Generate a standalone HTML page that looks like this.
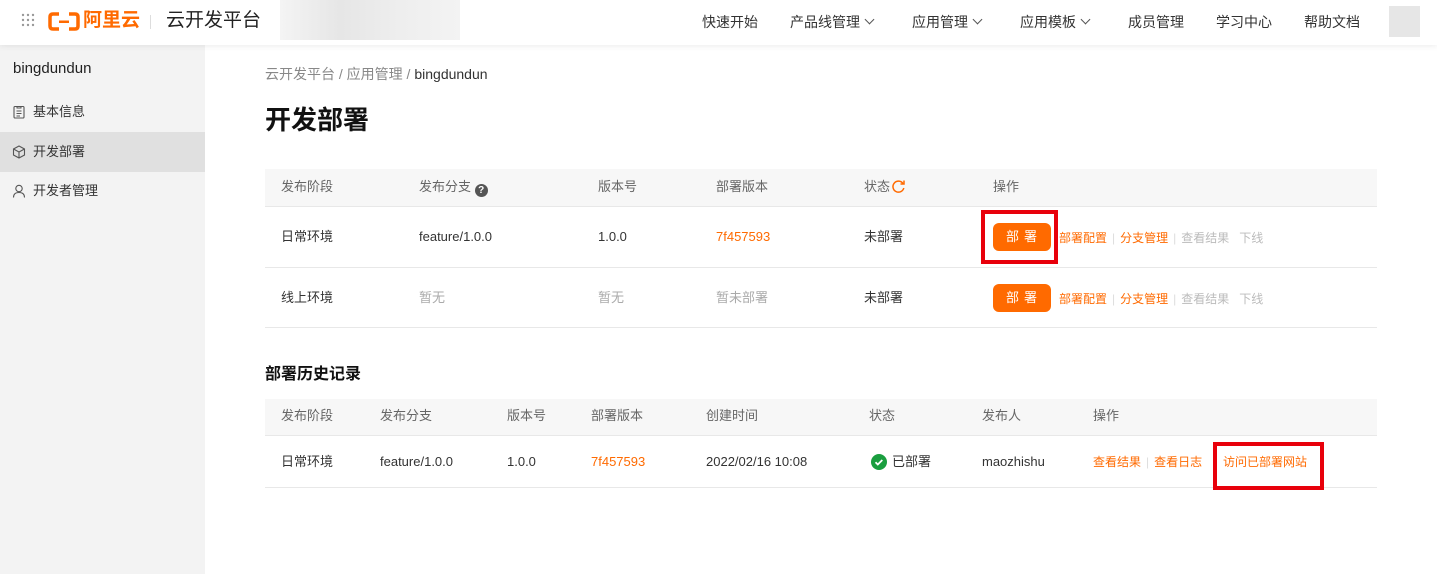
<!DOCTYPE html><html><head><meta charset="utf-8"><style>
*{margin:0;padding:0;box-sizing:border-box}
body{width:1437px;height:574px;position:relative;overflow:hidden;background:#fff;font-family:"Liberation Sans","Noto Sans CJK SC",sans-serif;font-size:13px;color:#333}
.a{position:absolute;white-space:nowrap;line-height:18px}
.hdr{position:absolute;left:0;top:0;width:1437px;height:45px;background:#fff;box-shadow:0 1px 6px rgba(0,0,0,.08);z-index:2}
.nav{top:12px;font-size:14px;line-height:20px;color:#333}
.side{position:absolute;left:0;top:45px;width:205px;height:529px;background:#f3f3f3}
.o{color:#ff6a00}.g{color:#aaa}.sep{color:#ddd;margin:0 5px}
.btn{position:absolute;width:58px;height:28px;background:#ff6a00;border-radius:6px;color:#fff;text-align:center;line-height:28px;font-size:13px;letter-spacing:5px;padding-left:4px}
.red{position:absolute;border:4px solid #e8000b}
.chev{display:inline-block;width:7px;height:7px;border-right:1.2px solid #555;border-bottom:1.2px solid #555;transform:rotate(45deg);margin-left:6px;position:relative;top:-4px}
</style></head><body>
<div class="hdr">
<svg class="a" style="left:21px;top:13px" width="14" height="14"><g fill="#999"><circle cx="2" cy="2" r="1.2"/><circle cx="7" cy="2" r="1.2"/><circle cx="12" cy="2" r="1.2"/><circle cx="2" cy="7" r="1.2"/><circle cx="7" cy="7" r="1.2"/><circle cx="12" cy="7" r="1.2"/><circle cx="2" cy="12" r="1.2"/><circle cx="7" cy="12" r="1.2"/><circle cx="12" cy="12" r="1.2"/></g></svg>
<svg class="a" style="left:48px;top:12px" width="32" height="19"><path d="M11 2H5Q2 2 2 5V14Q2 17 5 17H11M21 2H27Q30 2 30 5V14Q30 17 27 17H21" fill="none" stroke="#ff6a00" stroke-width="3.5"/><rect x="11" y="8.5" width="10" height="2.5" fill="#ff6a00"/></svg>
<div class="a" style="left:83px;top:9px;font-size:19px;line-height:24px;font-weight:bold;color:#ff6a00">阿里云</div>
<div class="a" style="left:150px;top:15px;width:1px;height:14px;background:#ddd"></div>
<div class="a" style="left:166px;top:9px;font-size:19px;line-height:24px;color:#222">云开发平台</div>
<div class="a" style="left:280px;top:0;width:180px;height:40px;background:linear-gradient(90deg,#f4f4f4,#e6e6e6,#eee,#f3f3f3)"></div>
<div class="a nav" style="left:702px">快速开始</div>
<div class="a nav" style="left:790px">产品线管理<span class="chev"></span></div>
<div class="a nav" style="left:912px">应用管理<span class="chev"></span></div>
<div class="a nav" style="left:1020px">应用模板<span class="chev"></span></div>
<div class="a nav" style="left:1128px">成员管理</div>
<div class="a nav" style="left:1216px">学习中心</div>
<div class="a nav" style="left:1304px">帮助文档</div>
<div class="a" style="left:1389px;top:6px;width:31px;height:31px;background:#e6e6e6"></div>
</div>
<div class="side">
<div class="a" style="left:13px;top:14px;font-size:15px;line-height:20px;color:#222">bingdundun</div>
<svg class="a" style="left:13px;top:60px" width="12" height="14"><rect x="1" y="1.5" width="10" height="11.5" rx="1" fill="none" stroke="#555" stroke-width="1.1"/><path d="M4 1V3H8V1M3.5 6H8.5M3.5 8.5H8.5M3.5 11H7" stroke="#555" stroke-width="1" fill="none"/></svg>
<div class="a" style="left:33px;top:58px">基本信息</div>
<div class="a" style="left:0;top:87px;width:205px;height:40px;background:#e0e0e0"></div>
<svg class="a" style="left:12px;top:100px" width="14" height="14"><path d="M7 1L12.5 4V10L7 13L1.5 10V4Z M1.5 4L7 7L12.5 4M7 7V13" fill="none" stroke="#555" stroke-width="1.1"/></svg>
<div class="a" style="left:33px;top:98px">开发部署</div>
<svg class="a" style="left:12px;top:139px" width="14" height="14"><circle cx="7" cy="4.5" r="3.2" fill="none" stroke="#555" stroke-width="1.1"/><path d="M1.5 13.5Q1.5 8.5 7 8.5Q12.5 8.5 12.5 13.5" fill="none" stroke="#555" stroke-width="1.1"/></svg>
<div class="a" style="left:33px;top:137px">开发者管理</div>
</div>
<div class="a" style="left:265px;top:64px;font-size:14px;line-height:20px;color:#888">云开发平台 / 应用管理 / <span style="color:#333">bingdundun</span></div>
<div class="a" style="left:265px;top:103px;font-size:26px;line-height:34px;font-weight:bold;color:#111">开发部署</div>
<div class="a" style="left:265px;top:169px;width:1112px;height:38px;background:#f7f7f7;border-bottom:1px solid #e8e8e8"></div>
<div class="a" style="left:265px;top:267px;width:1112px;height:1px;background:#e8e8e8"></div>
<div class="a" style="left:265px;top:327px;width:1112px;height:1px;background:#e8e8e8"></div>
<div class="a" style="left:281px;top:178px;color:#666">发布阶段</div>
<div class="a" style="left:419px;top:178px;color:#666">发布分支 <span style="display:inline-block;width:13px;height:13px;border-radius:50%;background:#555;color:#fff;font-size:10px;text-align:center;line-height:13px;font-weight:bold;vertical-align:-2px">?</span></div>
<div class="a" style="left:598px;top:178px;color:#666">版本号</div>
<div class="a" style="left:716px;top:178px;color:#666">部署版本</div>
<div class="a" style="left:864px;top:178px;color:#666">状态</div>
<svg class="a" style="left:891px;top:179px" width="15" height="15"><path d="M12 4.5A5.5 5.5 0 1 0 12.8 9" fill="none" stroke="#ff6a00" stroke-width="1.5"/><path d="M13 1.5V5H9.5" fill="none" stroke="#ff6a00" stroke-width="1.5"/></svg>
<div class="a" style="left:993px;top:178px;color:#666">操作</div>
<div class="a" style="left:281px;top:228px">日常环境</div>
<div class="a" style="left:419px;top:228px">feature/1.0.0</div>
<div class="a" style="left:598px;top:228px">1.0.0</div>
<div class="a o" style="left:716px;top:228px">7f457593</div>
<div class="a" style="left:864px;top:228px">未部署</div>
<div class="btn" style="left:993px;top:223px">部署</div>
<div class="a" style="left:1059px;top:229px;font-size:12px"><span class="o">部署配置</span><span class="sep">|</span><span class="o">分支管理</span><span class="sep">|</span><span style="color:#bbb">查看结果&nbsp;&nbsp; 下线</span></div>
<div class="red" style="left:981px;top:210px;width:77px;height:54px"></div>
<div class="a" style="left:281px;top:289px">线上环境</div>
<div class="a g" style="left:419px;top:289px">暂无</div>
<div class="a g" style="left:598px;top:289px">暂无</div>
<div class="a g" style="left:716px;top:289px">暂未部署</div>
<div class="a" style="left:864px;top:289px">未部署</div>
<div class="btn" style="left:993px;top:284px">部署</div>
<div class="a" style="left:1059px;top:290px;font-size:12px"><span class="o">部署配置</span><span class="sep">|</span><span class="o">分支管理</span><span class="sep">|</span><span style="color:#bbb">查看结果&nbsp;&nbsp; 下线</span></div>
<div class="a" style="left:265px;top:364px;font-size:16px;line-height:22px;font-weight:bold;color:#111">部署历史记录</div>
<div class="a" style="left:265px;top:399px;width:1112px;height:37px;background:#f7f7f7;border-bottom:1px solid #e8e8e8"></div>
<div class="a" style="left:265px;top:487px;width:1112px;height:1px;background:#e8e8e8"></div>
<div class="a" style="left:281px;top:407px;color:#666">发布阶段</div>
<div class="a" style="left:380px;top:407px;color:#666">发布分支</div>
<div class="a" style="left:507px;top:407px;color:#666">版本号</div>
<div class="a" style="left:591px;top:407px;color:#666">部署版本</div>
<div class="a" style="left:706px;top:407px;color:#666">创建时间</div>
<div class="a" style="left:869px;top:407px;color:#666">状态</div>
<div class="a" style="left:982px;top:407px;color:#666">发布人</div>
<div class="a" style="left:1093px;top:407px;color:#666">操作</div>
<div class="a" style="left:281px;top:453px">日常环境</div>
<div class="a" style="left:380px;top:453px">feature/1.0.0</div>
<div class="a" style="left:507px;top:453px">1.0.0</div>
<div class="a o" style="left:591px;top:453px">7f457593</div>
<div class="a" style="left:706px;top:453px">2022/02/16 10:08</div>
<svg class="a" style="left:871px;top:454px" width="16" height="16"><circle cx="8" cy="8" r="8" fill="#1a9e3f"/><path d="M4.5 8.2l2.3 2.3 4.5-4.5" stroke="#fff" stroke-width="1.8" fill="none"/></svg>
<div class="a" style="left:892px;top:453px">已部署</div>
<div class="a" style="left:982px;top:453px">maozhishu</div>
<div class="a" style="left:1093px;top:453px;font-size:12px"><span class="o">查看结果</span><span class="sep">|</span><span class="o">查看日志</span></div>
<div class="a o" style="left:1223px;top:453px;font-size:12px">访问已部署网站</div>
<div class="red" style="left:1213px;top:442px;width:111px;height:48px"></div>
</body></html>
